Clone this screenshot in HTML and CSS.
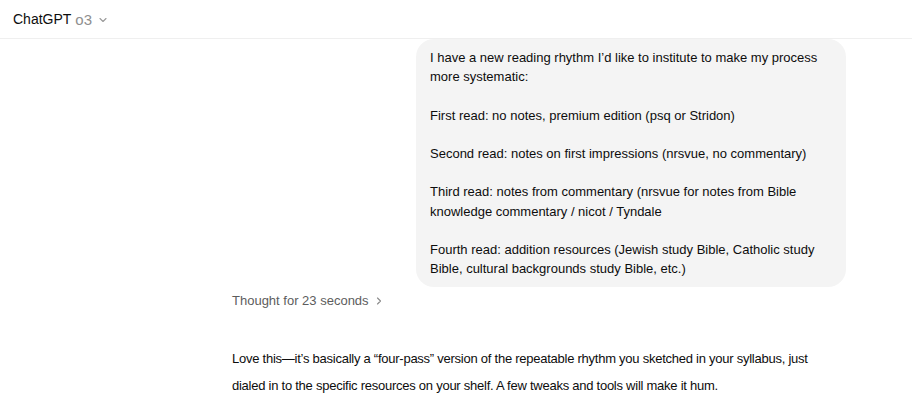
FILE: index.html
```html
<!DOCTYPE html>
<html>
<head>
<meta charset="utf-8">
<link rel="stylesheet" href="styles.css">
</head>
<body>
<header class="topbar">
  <span class="brand">ChatGPT</span>
  <span class="model">o3</span>
  <svg class="chev" width="10" height="10" viewBox="0 0 10 10"><path d="M2 3.5 L5 6.5 L8 3.5" fill="none" stroke="#9a9a9a" stroke-width="1.1" stroke-linecap="round" stroke-linejoin="round"/></svg>
</header>
<main class="thread">
  <div class="column">
    <div class="user-row">
      <div class="bubble">I have a new reading rhythm I’d like to institute to make my process more systematic:

First read: no notes, premium edition (psq or Stridon)

Second read: notes on first impressions (nrsvue, no commentary)

Third read: notes from commentary (nrsvue for notes from Bible knowledge commentary / nicot / Tyndale

Fourth read: addition resources (Jewish study Bible, Catholic study Bible, cultural backgrounds study Bible, etc.)</div>
    </div>
    <div class="thought">Thought for 23 seconds
      <svg width="10" height="10" viewBox="0 0 10 10"><path d="M3.5 2 L6.5 5 L3.5 8" fill="none" stroke="#8a8a8a" stroke-width="1.1" stroke-linecap="round" stroke-linejoin="round"/></svg>
    </div>
    <p class="answer">Love this—it’s basically a “four-pass” version of the repeatable rhythm you sketched in your syllabus, just dialed in to the specific resources on your shelf. A few tweaks and tools will make it hum.</p>
  </div>
</main>
</body>
</html>
```
FILE: styles.css
```css
html, body {
  margin: 0;
  padding: 0;
  background: #ffffff;
  font-family: "Liberation Sans", Arial, sans-serif;
  color: #0d0d0d;
  overflow: hidden;
}
.topbar {
  height: 39px;
  border-bottom: 1px solid #efefef;
  display: flex;
  align-items: center;
  padding-left: 13px;
  gap: 4px;
  box-sizing: border-box;
}
.brand {
  font-size: 14px;
  color: #0d0d0d;
}
.model {
  font-size: 15px;
  color: #8f8f8f;
}
.chev {
  margin-left: 2px;
  margin-top: 1px;
}
.thread {
  display: flex;
  justify-content: flex-start;
}
.column {
  margin-left: 232px;
  width: 614px;
  display: flex;
  flex-direction: column;
}
.user-row {
  display: flex;
  justify-content: flex-end;
}
.bubble {
  width: 430px;
  box-sizing: border-box;
  background: #f4f4f4;
  border-radius: 18px;
  padding: 9px 14px 9px 14px;
  font-size: 13px;
  line-height: 19.2px;
  white-space: pre-wrap;
  color: #0d0d0d;
}
.thought {
  margin-top: 5px;
  font-size: 13px;
  color: #5d5d5d;
  display: flex;
  align-items: center;
  gap: 5px;
  height: 17px;
}
.answer {
  margin: 36px 0 0 0;
  font-size: 13px;
  line-height: 27px;
  letter-spacing: -0.25px;
  color: #0d0d0d;
  width: 604px;
}
```
